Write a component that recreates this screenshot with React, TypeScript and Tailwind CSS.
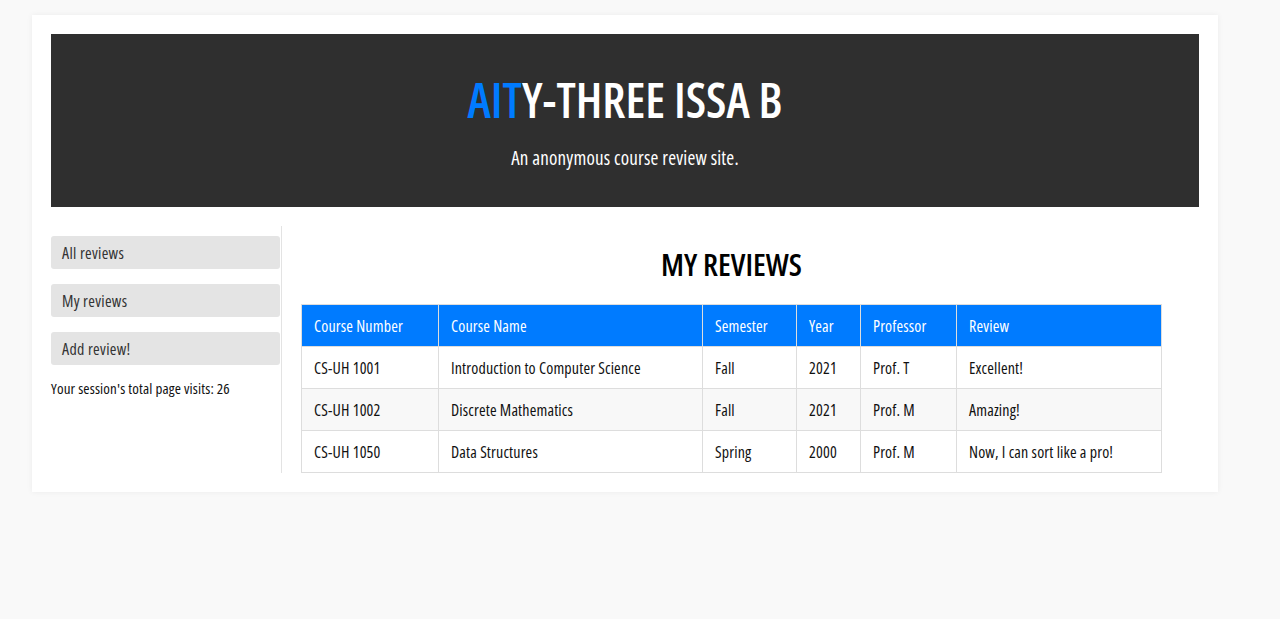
const rows = [
  ["CS-UH 1001", "Introduction to Computer Science", "Fall", "2021", "Prof. T", "Excellent!"],
  ["CS-UH 1002", "Discrete Mathematics", "Fall", "2021", "Prof. M", "Amazing!"],
  ["CS-UH 1050", "Data Structures", "Spring", "2000", "Prof. M", "Now, I can sort like a pro!"],
];

const heads = [
  { label: "Course Number", w: "w-[137px]" },
  { label: "Course Name", w: "w-[264px]" },
  { label: "Semester", w: "w-[94px]" },
  { label: "Year", w: "w-[64px]" },
  { label: "Professor", w: "w-[96px]" },
  { label: "Review", w: "w-[205px]" },
];

export default function App() {
  return (
    <div className="min-h-[619px] bg-[#f9f9f9] pt-[15px] pl-[32px] font-['Open_Sans',sans-serif] font-stretch-condensed">
      <div className="w-[1186px] bg-white p-[19px] shadow-[0_0_6px_rgba(0,0,0,0.06)]">
        <header className="flex h-[173px] flex-col items-center bg-[#2f2f2f] pt-[38px]">
          <h1 className="text-[48px] font-semibold leading-[56px] text-white">
            <span className="text-[#007bff]">AIT</span>Y-THREE ISSA B
          </h1>
          <p className="mt-[16px] text-[19px] font-medium tracking-[0.01em] text-white">An anonymous course review site.</p>
        </header>

        <div className="mt-[19px] flex">
          <aside className="w-[231px] border-r border-[#e3e3e3] pt-[10px]">
            <nav className="flex flex-col gap-[15px] pr-[1px]">
              {["All reviews", "My reviews", "Add review!"].map((l) => (
                <a key={l} className="flex h-[33px] items-center rounded-[3px] bg-[#e4e4e4] pl-[11px] text-[16px] font-medium tracking-[0.02em] text-[#333]">
                  {l}
                </a>
              ))}
            </nav>
            <p className="mt-[12px] text-[15px] font-medium tracking-[0.01em] text-[#111]">Your session's total page visits: 26</p>
          </aside>

          <main className="pl-[19px]">
            <h2 className="mt-[18px] w-[861px] text-center text-[31px] font-semibold leading-[40px] text-black">MY REVIEWS</h2>
            <table className="mt-[20px] w-[861px] table-fixed border-collapse text-[16px] font-medium tracking-[0.01em]">
              <thead>
                <tr className="bg-[#007bff] text-white">
                  {heads.map((h) => (
                    <th key={h.label} className={`${h.w} h-[42px] whitespace-nowrap border border-[#dddddd] px-[12px] text-left font-medium`}>
                      {h.label}
                    </th>
                  ))}
                </tr>
              </thead>
              <tbody>
                {rows.map((r, i) => (
                  <tr key={i} className={i % 2 === 1 ? "bg-[#f8f8f8]" : "bg-white"}>
                    {r.map((c, j) => (
                      <td key={j} className="h-[42px] whitespace-nowrap border border-[#dddddd] px-[12px] text-[#111]">
                        {c}
                      </td>
                    ))}
                  </tr>
                ))}
              </tbody>
            </table>
          </main>
        </div>
      </div>
    </div>
  );
}
